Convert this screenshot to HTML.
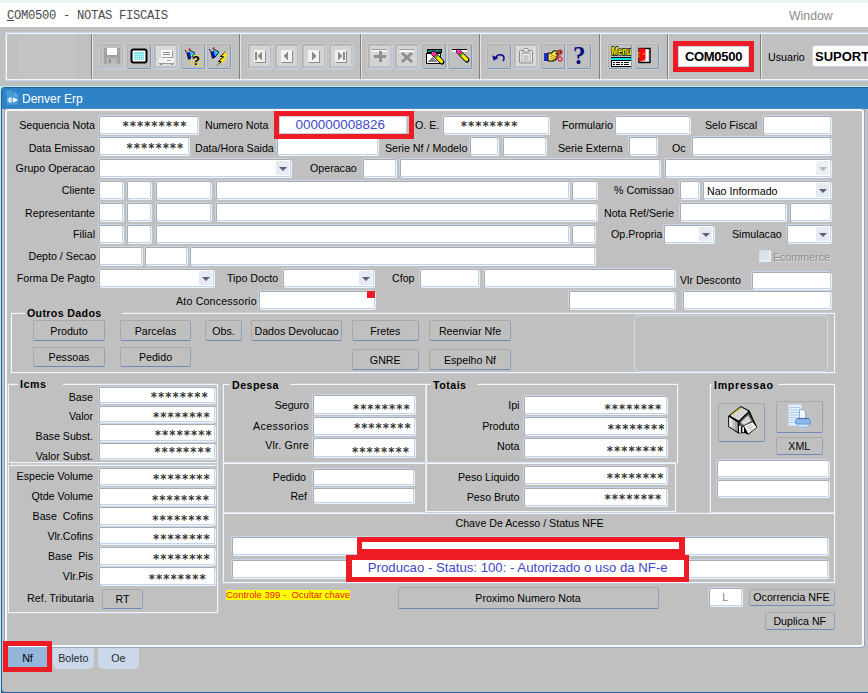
<!DOCTYPE html>
<html><head><meta charset="utf-8"><title>COM0500 - NOTAS FISCAIS</title>
<style>
html,body{margin:0;padding:0;}
body{width:868px;height:693px;overflow:hidden;background:#c0c0c0;font-family:"Liberation Sans",sans-serif;font-size:10.67px;color:#000;}
#root{position:relative;width:868px;height:693px;overflow:hidden;background:#c0c0c0;}
#root div{position:absolute;box-sizing:border-box;}
.l{white-space:pre;line-height:16px;height:16px;font-size:10.67px;}
.f{background:#fff;border:1px solid #c2d3ea;border-top-color:#ababab;border-left-color:#ababab;border-radius:2px;box-shadow:-1px -1px 0 #c5d6ec, 1px 1px 0 #eef3f9;}
.f span{position:absolute;top:50%;margin-top:-7px;line-height:16px;font-family:"DejaVu Sans Mono","Liberation Mono",monospace;font-size:12px;color:#2a2a2a;white-space:pre;-webkit-text-stroke:0.25px #2a2a2a;}
.c .ar{position:absolute;right:3.5px;top:50%;margin-top:-1px;width:0;height:0;border-left:4px solid transparent;border-right:4px solid transparent;border-top:4px solid #556;}
.c:after{content:"";position:absolute;right:1px;top:1px;bottom:1px;width:13px;background:#e6eaf2;z-index:0;}
.c .ar{z-index:1;}
.c.d:after{background:#eceff4;}
.c .ct{-webkit-text-stroke:0;left:3px;top:50%;margin-top:-7px;font-family:"Liberation Sans",sans-serif;font-size:10.67px;color:#000;}
.b{background:#c0c0c0;border:1px solid #8ea2bd;border-top-color:#a9a9a9;border-left-color:#a9a9a9;border-bottom-color:#6c8bb5;border-radius:2px;text-align:center;font-size:10.67px;white-space:pre;display:flex;align-items:center;justify-content:center;}
.g{border:1px solid #f2f6fb;box-shadow:0 0 0 1px rgba(196,212,234,0.450);}
.gt{background:#c0c0c0;font-weight:bold;font-size:10.67px;line-height:16px;height:16px;text-align:left;padding-left:2px;white-space:pre;}
.red{border:4px solid #ed1c24;z-index:5;}

</style></head><body>
<div id="root">
<div class="" style="left:0px;top:0px;width:868px;height:3px;background:#e6f4f6"></div>
<div class="" style="left:0px;top:3px;width:868px;height:24px;background:#fff"></div>
<div style="left:7px;top:9px;font-family:'Liberation Mono',monospace;font-size:12.2px;letter-spacing:-0.32px;line-height:14px;color:#4a4a4a;white-space:pre"><u>C</u>OM0500 - NOTAS FISCAIS</div>
<div style="left:789px;top:9px;font-size:12.3px;line-height:14px;color:#8a8a8a;white-space:pre">Window</div>
<div class="" style="left:6px;top:33px;width:874px;height:47px;border:1px solid #f2f6fb;box-shadow:0 0 0 1px #c6d7ec"></div>
<div class="" style="left:18px;top:34px;width:58px;height:45px;background:#c3c3c3"></div>
<div class="" style="left:91px;top:34px;width:1px;height:45px;background:#7f7f7f"></div>
<div class="" style="left:92px;top:34px;width:1px;height:45px;background:#e6e6e6"></div>
<div class="" style="left:239px;top:34px;width:1px;height:45px;background:#7f7f7f"></div>
<div class="" style="left:240px;top:34px;width:1px;height:45px;background:#e6e6e6"></div>
<div class="" style="left:360px;top:34px;width:1px;height:45px;background:#7f7f7f"></div>
<div class="" style="left:361px;top:34px;width:1px;height:45px;background:#e6e6e6"></div>
<div class="" style="left:479px;top:34px;width:1px;height:45px;background:#7f7f7f"></div>
<div class="" style="left:480px;top:34px;width:1px;height:45px;background:#e6e6e6"></div>
<div class="" style="left:599px;top:34px;width:1px;height:45px;background:#7f7f7f"></div>
<div class="" style="left:600px;top:34px;width:1px;height:45px;background:#e6e6e6"></div>
<div class="" style="left:667px;top:34px;width:1px;height:45px;background:#7f7f7f"></div>
<div class="" style="left:668px;top:34px;width:1px;height:45px;background:#e6e6e6"></div>
<div class="" style="left:760px;top:34px;width:1px;height:45px;background:#7f7f7f"></div>
<div class="" style="left:761px;top:34px;width:1px;height:45px;background:#e6e6e6"></div>
<div class="" style="left:100px;top:44px;width:24px;height:25px;border:1px solid #b0b0b0;border-right-color:#b9cbe2;border-bottom-color:#b9cbe2;border-radius:2px;box-shadow:0 0 0 1px rgba(220,228,238,0.350)"><svg width="24" height="24" viewBox="0 0 24 24" style="position:absolute;left:-1px;top:-1px" shape-rendering="crispEdges"><rect x="0" y="0" width="0" height="0"/><path d="M4 4h15l1 1v15h-16z" fill="#a3a3a3"/><rect x="7" y="4" width="10" height="7" fill="#fff"/><rect x="7" y="14" width="10" height="6" fill="#b8b8b8"/><rect x="9" y="15" width="2" height="4" fill="#8a8a8a"/></svg></div>
<div class="" style="left:127px;top:44px;width:24px;height:25px;border:1px solid #b0b0b0;border-right-color:#7c9bc3;border-bottom-color:#7c9bc3;border-radius:2px;box-shadow:0 0 0 1px rgba(220,228,238,0.350)"><svg width="24" height="24" viewBox="0 0 24 24" style="position:absolute;left:-1px;top:-1px" shape-rendering="crispEdges"><rect x="4.5" y="5.5" width="15" height="13" rx="2" fill="#fff" stroke="#000" stroke-width="2" shape-rendering="auto"/><rect x="7" y="8" width="10" height="8" fill="#7fe7f2"/><path d="M7 10h10M7 12h10M7 14h10" stroke="#e8ffff" stroke-width="1" stroke-dasharray="1 1"/></svg></div>
<div class="" style="left:153.5px;top:44px;width:24.0px;height:25px;border:1px solid #b0b0b0;border-right-color:#b9cbe2;border-bottom-color:#b9cbe2;border-radius:2px;box-shadow:0 0 0 1px rgba(220,228,238,0.350)"><svg width="24" height="24" viewBox="0 0 24 24" style="position:absolute;left:-1px;top:-1px" shape-rendering="crispEdges"><rect x="2" y="2" width="20" height="20" fill="#dadada"/><rect x="7" y="6" width="11" height="7.500" fill="#fbfbfb"/><path d="M7.500 13.500h10M18.500 7v6.500" stroke="#9c9c9c" stroke-width="1"/><path d="M9 8.500h7M9 10.500h7" stroke="#8a8a8a" stroke-width="1"/><rect x="5" y="14" width="15" height="5" fill="#f4f4f4"/><path d="M5 19.500h15" stroke="#9a9a9a"/><path d="M13 16.500h4" stroke="#a8a8a8"/><path d="M6 20.500h2M17 20.500h2" stroke="#8a8a8a"/></svg></div>
<div class="" style="left:180.5px;top:44px;width:24.0px;height:25px;border:1px solid #b0b0b0;border-right-color:#7c9bc3;border-bottom-color:#7c9bc3;border-radius:2px;box-shadow:0 0 0 1px rgba(220,228,238,0.350)"><svg width="24" height="24" viewBox="0 0 24 24" style="position:absolute;left:-1px;top:-1px" shape-rendering="crispEdges"><g transform="translate(0 1.5)" shape-rendering="auto"><path d="M6 7.500l3.200-1.500 1 6.500-2.700 1.300z" fill="#0a14e6"/><path d="M9.200 6l4.500 2-3.500 4.500z" fill="#14d2f0"/><path d="M4 4.500l3 4M7.500 4l6.500 3.500M6 7.500l1.500 6.300 2.700-1.300 3.500-4.500" stroke="#000" stroke-width="0.900" fill="none"/><rect x="8" y="2.800" width="1.500" height="1.500" fill="#e81010"/></g><path d="M10 11.500h11M10 13.500h11M10 15.500h11M10 17.500h11M10 19.500h11M10 21.500h11" stroke="#f4e800" stroke-width="1" stroke-dasharray="1 1"/><text x="15" y="21" font-family="Liberation Sans,sans-serif" font-weight="bold" font-size="13" text-anchor="middle" fill="#000" shape-rendering="auto">?</text></svg></div>
<div class="" style="left:207px;top:44px;width:24px;height:25px;border:1px solid #b0b0b0;border-right-color:#7c9bc3;border-bottom-color:#7c9bc3;border-radius:2px;box-shadow:0 0 0 1px rgba(220,228,238,0.350)"><svg width="24" height="24" viewBox="0 0 24 24" style="position:absolute;left:-1px;top:-1px" shape-rendering="crispEdges"><g transform="translate(-2 0.5)" shape-rendering="auto"><path d="M6 7.500l3.200-1.500 1 6.500-2.700 1.300z" fill="#0a14e6"/><path d="M9.200 6l4.500 2-3.500 4.500z" fill="#14d2f0"/><path d="M4 4.500l3 4M7.500 4l6.500 3.500M6 7.500l1.500 6.300 2.700-1.300 3.500-4.500" stroke="#000" stroke-width="0.900" fill="none"/><rect x="8" y="2.800" width="1.500" height="1.500" fill="#e81010"/></g><g shape-rendering="auto"><path d="M19.800 6.500L13.500 12.500L16.500 13L11.500 17.500L14 18L9.500 22.300L19 15.500L16.500 15L20.500 11L17.500 10.500Z" fill="#000" transform="translate(-0.800 0.300)"/><path d="M20.300 6L14.500 12L17.500 12.500L12.500 17L15 17.500L10.500 21.800L19.500 15.500L17 15L21 11L18 10.500Z" fill="#ffee00"/></g></svg></div>
<div class="" style="left:248px;top:44px;width:24px;height:25px;border:1px solid #b0b0b0;border-right-color:#b9cbe2;border-bottom-color:#b9cbe2;border-radius:2px;box-shadow:0 0 0 1px rgba(220,228,238,0.350)"><svg width="24" height="24" viewBox="0 0 24 24" style="position:absolute;left:-1px;top:-1px" shape-rendering="crispEdges"><rect x="2" y="2" width="20" height="20" fill="#d4d4d4"/><rect x="6" y="6" width="11" height="12" fill="#f2f2f2"/><path d="M7 18.5h11M17.5 7v12" stroke="#8c8c8c" stroke-width="1"/><path d="M8 8v8" stroke="#8c8c8c" stroke-width="1.5"/><path d="M14 8v8l-5-4z" fill="#8c8c8c"/></svg></div>
<div class="" style="left:275px;top:44px;width:24px;height:25px;border:1px solid #b0b0b0;border-right-color:#b9cbe2;border-bottom-color:#b9cbe2;border-radius:2px;box-shadow:0 0 0 1px rgba(220,228,238,0.350)"><svg width="24" height="24" viewBox="0 0 24 24" style="position:absolute;left:-1px;top:-1px" shape-rendering="crispEdges"><rect x="2" y="2" width="20" height="20" fill="#d4d4d4"/><rect x="6" y="6" width="11" height="12" fill="#f2f2f2"/><path d="M7 18.5h11M17.5 7v12" stroke="#8c8c8c" stroke-width="1"/><path d="M13 8v8l-5-4z" fill="#8c8c8c"/></svg></div>
<div class="" style="left:301.5px;top:44px;width:24.0px;height:25px;border:1px solid #b0b0b0;border-right-color:#b9cbe2;border-bottom-color:#b9cbe2;border-radius:2px;box-shadow:0 0 0 1px rgba(220,228,238,0.350)"><svg width="24" height="24" viewBox="0 0 24 24" style="position:absolute;left:-1px;top:-1px" shape-rendering="crispEdges"><rect x="2" y="2" width="20" height="20" fill="#d4d4d4"/><rect x="6" y="6" width="11" height="12" fill="#f2f2f2"/><path d="M7 18.5h11M17.5 7v12" stroke="#8c8c8c" stroke-width="1"/><path d="M10 8v8l5-4z" fill="#8c8c8c"/></svg></div>
<div class="" style="left:328.5px;top:44px;width:24.0px;height:25px;border:1px solid #b0b0b0;border-right-color:#b9cbe2;border-bottom-color:#b9cbe2;border-radius:2px;box-shadow:0 0 0 1px rgba(220,228,238,0.350)"><svg width="24" height="24" viewBox="0 0 24 24" style="position:absolute;left:-1px;top:-1px" shape-rendering="crispEdges"><rect x="2" y="2" width="20" height="20" fill="#d4d4d4"/><rect x="6" y="6" width="11" height="12" fill="#f2f2f2"/><path d="M7 18.5h11M17.5 7v12" stroke="#8c8c8c" stroke-width="1"/><path d="M15 8v8" stroke="#8c8c8c" stroke-width="1.5"/><path d="M9 8v8l5-4z" fill="#8c8c8c"/></svg></div>
<div class="" style="left:368px;top:44px;width:24px;height:25px;border:1px solid #b0b0b0;border-right-color:#b9cbe2;border-bottom-color:#b9cbe2;border-radius:2px;box-shadow:0 0 0 1px rgba(220,228,238,0.350)"><svg width="24" height="24" viewBox="0 0 24 24" style="position:absolute;left:-1px;top:-1px" shape-rendering="crispEdges"><rect x="2" y="2" width="20" height="20" fill="#d4d4d4"/><rect x="4" y="5" width="15" height="3" fill="#f6f6f6"/><path d="M4 5.5h15" stroke="#9a9a9a"/><path d="M12 7v11M6 12.5h12" stroke="#8f8f8f" stroke-width="3"/></svg></div>
<div class="" style="left:395px;top:44px;width:24px;height:25px;border:1px solid #b0b0b0;border-right-color:#b9cbe2;border-bottom-color:#b9cbe2;border-radius:2px;box-shadow:0 0 0 1px rgba(220,228,238,0.350)"><svg width="24" height="24" viewBox="0 0 24 24" style="position:absolute;left:-1px;top:-1px" shape-rendering="crispEdges"><rect x="2" y="2" width="20" height="20" fill="#d4d4d4"/><rect x="4" y="5" width="15" height="3" fill="#f6f6f6"/><path d="M4 5.5h15" stroke="#9a9a9a"/><path d="M7 9l10 9M17 9l-10 9" stroke="#8f8f8f" stroke-width="3" shape-rendering="auto"/></svg></div>
<div class="" style="left:421.5px;top:44px;width:24.0px;height:25px;border:1px solid #b0b0b0;border-right-color:#7c9bc3;border-bottom-color:#7c9bc3;border-radius:2px;box-shadow:0 0 0 1px rgba(220,228,238,0.350)"><svg width="24" height="24" viewBox="0 0 24 24" style="position:absolute;left:-1px;top:-1px" shape-rendering="crispEdges"><rect x="5" y="5" width="14" height="3" fill="#0a7a80" stroke="#000"/><rect x="4.5" y="9.500" width="14" height="10" fill="#fff" stroke="#000" shape-rendering="auto"/><path d="M6 18l4-5 5 5z" fill="#888"/><g shape-rendering="auto"><path d="M11.5 9.5l8.500 8.500" stroke="#000" stroke-width="5" stroke-linecap="round"/><path d="M11.5 9.5l8 8" stroke="#ffee00" stroke-width="3.200" stroke-linecap="round"/><path d="M11.5 9.5l2.500 2.500" stroke="#ff30c0" stroke-width="3.600" stroke-linecap="round"/><path d="M13 11l1 1" stroke="#e01818" stroke-width="3.600"/><path d="M14 12l1.200 1.200" stroke="#20d020" stroke-width="3.600"/></g></svg></div>
<div class="" style="left:448px;top:44px;width:24px;height:25px;border:1px solid #b0b0b0;border-right-color:#7c9bc3;border-bottom-color:#7c9bc3;border-radius:2px;box-shadow:0 0 0 1px rgba(220,228,238,0.350)"><svg width="24" height="24" viewBox="0 0 24 24" style="position:absolute;left:-1px;top:-1px" shape-rendering="crispEdges"><rect x="4" y="5" width="15" height="3" fill="#fff"/><path d="M4 5.5h15" stroke="#000"/><g shape-rendering="auto"><path d="M10.5 7.5l8.500 8.500" stroke="#000" stroke-width="5" stroke-linecap="round"/><path d="M10.5 7.5l8 8" stroke="#ffee00" stroke-width="3.200" stroke-linecap="round"/><path d="M10.5 7.5l2.500 2.500" stroke="#ff30c0" stroke-width="3.600" stroke-linecap="round"/><path d="M12 9l1 1" stroke="#e01818" stroke-width="3.600"/><path d="M13 10l1.200 1.200" stroke="#20d020" stroke-width="3.600"/></g></svg></div>
<div class="" style="left:486.5px;top:44px;width:24.0px;height:25px;border:1px solid #b0b0b0;border-right-color:#7c9bc3;border-bottom-color:#7c9bc3;border-radius:2px;box-shadow:0 0 0 1px rgba(220,228,238,0.350)"><svg width="24" height="24" viewBox="0 0 24 24" style="position:absolute;left:-1px;top:-1px" shape-rendering="crispEdges"><g shape-rendering="auto"><path d="M9 13.500c1.500-3.500 7-3.800 8 0 0.300 1.500-0.300 2.700-1.300 3.400" fill="none" stroke="#0a0a90" stroke-width="1.500"/><path d="M5.300 11.200l1.200 5.500 4.800-2.700z" fill="#0a0a90"/></g></svg></div>
<div class="" style="left:513.5px;top:44px;width:24.0px;height:25px;border:1px solid #b0b0b0;border-right-color:#b9cbe2;border-bottom-color:#b9cbe2;border-radius:2px;box-shadow:0 0 0 1px rgba(220,228,238,0.350)"><svg width="24" height="24" viewBox="0 0 24 24" style="position:absolute;left:-1px;top:-1px" shape-rendering="crispEdges"><rect x="2" y="2" width="20" height="20" fill="#dadada"/><g shape-rendering="auto"><rect x="5.500" y="6.500" width="13" height="12.500" rx="1" fill="#e4e4e4" stroke="#8a8a8a"/><path d="M9 6.500c0-3 6-3 6 0v1.500h-6z" fill="#e4e4e4" stroke="#8a8a8a"/><rect x="8" y="9.500" width="8" height="8.500" fill="#f4f4f4" stroke="#a0a0a0" stroke-width="0.800"/><path d="M9.500 12h5M9.500 14h5M9.500 16h5" stroke="#8f8f8f" stroke-width="0.900"/></g></svg></div>
<div class="" style="left:540.5px;top:44px;width:24.0px;height:25px;border:1px solid #b0b0b0;border-right-color:#7c9bc3;border-bottom-color:#7c9bc3;border-radius:2px;box-shadow:0 0 0 1px rgba(220,228,238,0.350)"><svg width="24" height="24" viewBox="0 0 24 24" style="position:absolute;left:-1px;top:-1px" shape-rendering="crispEdges"><g shape-rendering="auto"><rect x="3" y="9" width="4" height="8" fill="#1a2ed0"/><path d="M7 9h4l1-2h8v2h-5v1h2v2h-1v2h-1v2h-2v1h-6z" fill="#ffe24a" stroke="#000" stroke-width="1"/><path d="M10 10v6M12 11v5M14 12v3" stroke="#000" stroke-width="0.600" stroke-dasharray="1 1"/><circle cx="19" cy="8" r="2" fill="none" stroke="#e0202a" stroke-width="1.200"/><circle cx="19" cy="15" r="2" fill="none" stroke="#e0202a" stroke-width="1.200"/><path d="M15 12h5" stroke="#e0202a"/></g></svg></div>
<div class="" style="left:567px;top:44px;width:24px;height:25px;border:1px solid #b0b0b0;border-right-color:#7c9bc3;border-bottom-color:#7c9bc3;border-radius:2px;box-shadow:0 0 0 1px rgba(220,228,238,0.350)"><svg width="24" height="24" viewBox="0 0 24 24" style="position:absolute;left:-1px;top:-1px" shape-rendering="crispEdges"><text x="12.200" y="20.300" font-family="Liberation Serif,serif" font-weight="bold" font-size="25" text-anchor="middle" fill="#0a0a80" shape-rendering="auto">?</text></svg></div>
<div class="" style="left:608px;top:44px;width:24px;height:25px;border:1px solid #b0b0b0;border-right-color:#7c9bc3;border-bottom-color:#7c9bc3;border-radius:2px;box-shadow:0 0 0 1px rgba(220,228,238,0.350)"><svg width="23" height="24" viewBox="0 0 23 24" style="position:absolute;left:-1px;top:-1px" shape-rendering="crispEdges"><text x="3.500" y="11.300" font-family="Liberation Sans,sans-serif" font-weight="bold" font-size="10.500" fill="#ffff00" stroke="#000" stroke-width="1.600" paint-order="stroke" textLength="20" lengthAdjust="spacingAndGlyphs" shape-rendering="auto">Menu</text><path d="M3 13h20" stroke="#000" stroke-width="1"/><path d="M3 14.500h20" stroke="#00e0e8" stroke-width="2"/><rect x="3.500" y="16.500" width="20" height="6" fill="#fff" stroke="#000"/><path d="M5 18.500h2M8 18.500h4M13 18.500h2M16 18.500h5M5 20.500h2M8 20.500h4M13 20.500h2M16 20.500h5" stroke="#000" stroke-width="1"/></svg></div>
<div class="" style="left:635px;top:44px;width:24px;height:25px;border:1px solid #b0b0b0;border-right-color:#7c9bc3;border-bottom-color:#7c9bc3;border-radius:2px;box-shadow:0 0 0 1px rgba(220,228,238,0.350)"><svg width="24" height="24" viewBox="0 0 24 24" style="position:absolute;left:-1px;top:-1px" shape-rendering="crispEdges"><g shape-rendering="auto"><rect x="4" y="4.500" width="11" height="14" fill="#d8d8d8" stroke="#000" stroke-width="1.400"/><rect x="10" y="5.500" width="3" height="11" fill="#fff"/><path d="M4 4.500h6.500v10.500l-1 1.500h-2l-0.800 1h-2.700z" fill="#ff0808"/><rect x="8" y="9.500" width="1.300" height="1.300" fill="#ffee00"/><rect x="3" y="8.500" width="1.200" height="1.200" fill="#ffee00"/><rect x="3" y="11.500" width="1.200" height="1.200" fill="#ffee00"/></g></svg></div>
<div class="red" style="left:673px;top:41px;width:81px;height:31px;border-width:5px"></div>
<div class="" style="left:678px;top:46px;width:71px;height:21px;background:#fff;border:1px solid #c3d3e6;font-weight:bold;font-size:13px;letter-spacing:-0.3px;text-align:center;line-height:19px">COM0500</div>
<div class="l" style="left:768px;top:49px;">Usuario</div>
<div class="" style="left:812px;top:44.5px;width:68px;height:22.5px;background:#fff;border:1px solid #c3d3e6;border-radius:3px;font-weight:bold;font-size:13px;line-height:21px;padding-left:2px;white-space:pre">SUPORTE</div>
<div class="" style="left:0px;top:83px;width:868px;height:610px;background:#c0c0c0"></div>
<div class="" style="left:0px;top:86px;width:868px;height:607px;background:#b4ecf2"></div>
<div class="" style="left:1px;top:87px;width:879px;height:613px;background:#2b5f9c;border-radius:4px 0 0 4px"></div>
<div class="" style="left:2px;top:88px;width:878px;height:21px;background:#2e83c6;border-radius:3px 0 0 0"></div>
<div class="" style="left:2px;top:109px;width:878px;height:583px;background:#c0c0c0;border-radius:0 0 0 3px"></div>
<div style="left:22px;top:92px;color:#fff;font-size:12px;line-height:15px;white-space:pre">Denver Erp</div>
<svg style="position:absolute;left:6px;top:90px" width="13" height="15" viewBox="0 0 13 15"><path d="M0.500 0.500h6v3.500h1.500v-2.500l4.500 4v9.500h-12z" fill="#4a9ad9" stroke="#3a8acb" stroke-width="0.800"/><path d="M8 1.500l4.500 4h-4.500z" fill="#62aae3"/><circle cx="4.300" cy="10" r="1.900" fill="#fff"/><circle cx="4.300" cy="10" r="2.500" fill="none" stroke="#fff" stroke-width="1" stroke-dasharray="0.900 1.060"/><circle cx="5" cy="10" r="0.800" fill="#3a8acb"/><path d="M7.300 7.300l4.600 2.700-4.600 2.700z" fill="#fff"/></svg>
<div class="" style="left:5px;top:109px;width:859px;height:538px;border:2px solid #f4f7fc;border-radius:3px;box-shadow:0 0 0 1px rgba(110,145,195,0.550);background:transparent"></div>
<div class="l" style="right:773px;top:117px;">Sequencia Nota</div>
<div class="f" style="left:99px;top:116px;width:99px;height:18px;"><span style="right:10px">*********</span></div>
<div class="l" style="left:205px;top:117px;">Numero Nota</div>
<div class="red" style="left:274px;top:111px;width:140px;height:28px;border-width:5px;background:#c0c0c0"></div>
<div class="" style="left:279px;top:116px;width:128px;height:18px;background:#fff;border:1px solid #c3d3e6;border-radius:0 2px 2px 0;z-index:6;color:#3f48cc;font-size:13.4px;line-height:15px;padding-left:15.500px">000000008826</div>
<div class="l" style="left:415px;top:117px;">O. E.</div>
<div class="f" style="left:443px;top:116px;width:106px;height:18px;"><span style="right:30px">********</span></div>
<div class="l" style="left:562px;top:117px;">Formulario</div>
<div class="f" style="left:615px;top:116px;width:75px;height:18px;"></div>
<div class="l" style="left:705px;top:117px;">Selo Fiscal</div>
<div class="f" style="left:763px;top:116px;width:68px;height:18px;"></div>
<div class="l" style="right:773px;top:140px;">Data Emissao</div>
<div class="f" style="left:99px;top:137px;width:90px;height:18px;"><span style="right:4.2px;top:2.3px;margin-top:0">********</span></div>
<div class="l" style="left:195px;top:140px;">Data/Hora Saida</div>
<div class="f" style="left:277px;top:137px;width:101px;height:18px;"></div>
<div class="l" style="left:385px;top:140px;">Serie Nf / Modelo</div>
<div class="f" style="left:470px;top:137px;width:28px;height:18px;"></div>
<div class="f" style="left:503px;top:137px;width:43px;height:18px;"></div>
<div class="l" style="left:558px;top:140px;">Serie Externa</div>
<div class="f" style="left:629px;top:137px;width:28px;height:18px;"></div>
<div class="l" style="left:672px;top:140px;">Oc</div>
<div class="f" style="left:692px;top:137px;width:139px;height:18px;"></div>
<div class="l" style="right:773px;top:160px;">Grupo Operacao</div>
<div class="f c" style="left:99px;top:159px;width:192px;height:18px;"><i class="ar" style="border-top-color:#5a607a"></i></div>
<div class="l" style="left:310px;top:160px;">Operacao</div>
<div class="f" style="left:363px;top:159px;width:33px;height:18px;"></div>
<div class="f" style="left:400px;top:159px;width:260px;height:18px;"></div>
<div class="f c d" style="left:665px;top:159px;width:166px;height:18px;"><i class="ar" style="border-top-color:#b4b8be"></i></div>
<div class="l" style="right:773px;top:182px;">Cliente</div>
<div class="f" style="left:99px;top:181px;width:24px;height:18px;"></div>
<div class="f" style="left:127px;top:181px;width:24px;height:18px;"></div>
<div class="f" style="left:156px;top:181px;width:55px;height:18px;"></div>
<div class="f" style="left:216px;top:181px;width:353px;height:18px;"></div>
<div class="f" style="left:572px;top:181px;width:25px;height:18px;"></div>
<div class="l" style="left:614px;top:182px;">% Comissao</div>
<div class="f" style="left:680px;top:181px;width:19px;height:18px;"></div>
<div class="f c" style="left:703px;top:181px;width:128px;height:18px;"><span class="ct">Nao Informado</span><i class="ar" style="border-top-color:#5a607a"></i></div>
<div class="l" style="right:773px;top:205px;">Representante</div>
<div class="f" style="left:99px;top:203px;width:24px;height:18px;"></div>
<div class="f" style="left:127px;top:203px;width:24px;height:18px;"></div>
<div class="f" style="left:156px;top:203px;width:55px;height:18px;"></div>
<div class="f" style="left:216px;top:203px;width:381px;height:18px;"></div>
<div class="l" style="left:604px;top:205px;">Nota Ref/Serie</div>
<div class="f" style="left:680px;top:203px;width:106px;height:18px;"></div>
<div class="f" style="left:790px;top:203px;width:41px;height:18px;"></div>
<div class="l" style="right:773px;top:226px;">Filial</div>
<div class="f" style="left:99px;top:225px;width:24px;height:18px;"></div>
<div class="f" style="left:127px;top:225px;width:24px;height:18px;"></div>
<div class="f" style="left:156px;top:225px;width:413px;height:18px;"></div>
<div class="f" style="left:572px;top:225px;width:23px;height:18px;"></div>
<div class="l" style="left:611px;top:226px;">Op.Propria</div>
<div class="f c" style="left:664px;top:225px;width:50px;height:18px;"><i class="ar" style="border-top-color:#5a607a"></i></div>
<div class="l" style="left:732px;top:226px;">Simulacao</div>
<div class="f c" style="left:787px;top:225px;width:44px;height:18px;"><i class="ar" style="border-top-color:#5a607a"></i></div>
<div class="l" style="right:772px;top:248px;">Depto / Secao</div>
<div class="f" style="left:99px;top:247px;width:43px;height:18px;"></div>
<div class="f" style="left:145px;top:247px;width:42px;height:18px;"></div>
<div class="f" style="left:190px;top:247px;width:405px;height:18px;"></div>
<div class="" style="left:759px;top:250px;width:12px;height:12px;background:#dce2eb;border:1px solid #d4dae4;border-right:2px solid #e8ecf2;border-bottom:2px solid #e8ecf2"></div>
<div class="l" style="left:773px;top:249px;color:#8e8e8e;text-shadow:1px 1px 0 #e0e0e0">Ecommerce</div>
<div class="l" style="right:773px;top:270px;">Forma De Pagto</div>
<div class="f c" style="left:99px;top:269px;width:115px;height:18px;"><i class="ar" style="border-top-color:#5a607a"></i></div>
<div class="l" style="left:227px;top:270px;">Tipo Docto</div>
<div class="f c" style="left:283px;top:269px;width:91px;height:18px;"><i class="ar" style="border-top-color:#5a607a"></i></div>
<div class="l" style="left:392px;top:270px;">Cfop</div>
<div class="f" style="left:420px;top:269px;width:59px;height:18px;"></div>
<div class="f" style="left:484px;top:269px;width:191px;height:18px;"></div>
<div class="l" style="left:680px;top:272px;">Vlr Desconto</div>
<div class="f" style="left:752px;top:272px;width:79px;height:17px;"></div>
<div class="l" style="left:176px;top:293px;letter-spacing:0.17px">Ato Concessorio</div>
<div class="f" style="left:259px;top:291px;width:116px;height:18px;"></div>
<div class="" style="left:367px;top:291px;width:8px;height:7px;background:#ed1c24"></div>
<div class="f" style="left:569px;top:291px;width:106px;height:18px;"></div>
<div class="f" style="left:683px;top:291px;width:148px;height:18px;"></div>
<div class="g" style="left:11px;top:313px;width:824px;height:60px;"></div>
<div class="gt" style="left:25px;top:305px;width:97px;letter-spacing:0.336px;">Outros Dados</div>
<div class="b" style="left:33px;top:320px;width:72px;height:21px;">Produto</div>
<div class="b" style="left:120px;top:320px;width:71px;height:21px;">Parcelas</div>
<div class="b" style="left:205px;top:320px;width:37px;height:21px;">Obs.</div>
<div class="b" style="left:251px;top:320px;width:91px;height:21px;">Dados Devolucao</div>
<div class="b" style="left:352px;top:320px;width:66.5px;height:21px;">Fretes</div>
<div class="b" style="left:429px;top:320px;width:82px;height:21px;">Reenviar Nfe</div>
<div class="b" style="left:33px;top:347px;width:72px;height:20px;">Pessoas</div>
<div class="b" style="left:120px;top:347px;width:71px;height:20px;">Pedido</div>
<div class="b" style="left:352px;top:349px;width:66.5px;height:21px;">GNRE</div>
<div class="b" style="left:429px;top:349px;width:82px;height:21px;">Espelho Nf</div>
<div class="" style="left:634px;top:315px;width:194px;height:57px;border:1px solid #cdd9ea;border-radius:4px"></div>
<div class="g" style="left:8px;top:384px;width:210px;height:79px;"></div>
<div class="gt" style="left:18px;top:376px;width:45px;letter-spacing:0.550px;">Icms</div>
<div class="l" style="right:775px;top:389px;">Base</div>
<div class="f" style="left:99px;top:387px;width:116px;height:16px;"><span style="right:5.9px;top:0.5px;margin-top:0">********</span></div>
<div class="l" style="right:775px;top:408px;">Valor</div>
<div class="f" style="left:99px;top:405.5px;width:116px;height:16.0px;"><span style="right:3.7px;top:2.0px;margin-top:0">********</span></div>
<div class="l" style="right:775px;top:428px;">Base Subst.</div>
<div class="f" style="left:99px;top:424px;width:116px;height:16.5px;"><span style="right:1.9px;top:2.0px;margin-top:0">********</span></div>
<div class="l" style="right:775px;top:447.5px;">Valor Subst.</div>
<div class="f" style="left:99px;top:443px;width:116px;height:15.5px;"><span style="right:2.5px;top:0.0px;margin-top:0">********</span></div>
<div class="g" style="left:8px;top:465px;width:210px;height:147.5px;"></div>
<div class="l" style="right:775px;top:467.5px;">Especie Volume</div>
<div class="f" style="left:99px;top:468px;width:116px;height:17px;"><span style="right:3.7px;top:2.2px;margin-top:0">********</span></div>
<div class="l" style="right:775px;top:487.5px;">Qtde Volume</div>
<div class="f" style="left:99px;top:487.5px;width:116px;height:17.0px;"><span style="right:4.6px;top:3.6px;margin-top:0">********</span></div>
<div class="l" style="right:775px;top:508px;">Base  Cofins</div>
<div class="f" style="left:99px;top:507px;width:116px;height:17.5px;"><span style="right:4.5px;top:3.9px;margin-top:0">********</span></div>
<div class="l" style="right:775px;top:528px;">Vlr.Cofins</div>
<div class="f" style="left:99px;top:527px;width:116px;height:17px;"><span style="right:3.7px;top:3.1px;margin-top:0">********</span></div>
<div class="l" style="right:775px;top:548px;">Base  Pis</div>
<div class="f" style="left:99px;top:547px;width:116px;height:17.5px;"><span style="right:3.7px;top:3.2px;margin-top:0">********</span></div>
<div class="l" style="right:775px;top:568px;">Vlr.Pis</div>
<div class="f" style="left:99px;top:567px;width:116px;height:17.5px;"><span style="right:7.9px;top:2.9px;margin-top:0">********</span></div>
<div class="l" style="right:774px;top:590px;">Ref. Tributaria</div>
<div class="b" style="left:102px;top:589px;width:41px;height:20px;">RT</div>
<div class="g" style="left:222.5px;top:384px;width:203.0px;height:79px;"></div>
<div class="gt" style="left:230px;top:377px;width:60px;letter-spacing:0.451px;">Despesa</div>
<div class="l" style="right:559px;top:397.0px;">Seguro</div>
<div class="f" style="left:312.5px;top:395px;width:102.0px;height:18.5px;"><span style="right:3.3px;top:4.5px;margin-top:0">********</span></div>
<div class="l" style="right:559px;top:417.5px;letter-spacing:0.38px">Acessorios</div>
<div class="f" style="left:312.5px;top:416.5px;width:102.0px;height:18.5px;"><span style="right:2.3px;top:2.7px;margin-top:0">********</span></div>
<div class="l" style="right:559px;top:437.0px;letter-spacing:0.200px">Vlr. Gnre</div>
<div class="f" style="left:312.5px;top:437.5px;width:102.0px;height:19.5px;"><span style="right:4.1px;top:5.8px;margin-top:0">********</span></div>
<div class="g" style="left:222.5px;top:463px;width:203.0px;height:50px;"></div>
<div class="l" style="right:562px;top:469px;">Pedido</div>
<div class="f" style="left:312.5px;top:468.5px;width:101.0px;height:16.0px;"></div>
<div class="l" style="right:561px;top:487.5px;">Ref</div>
<div class="f" style="left:312.5px;top:487.5px;width:101.0px;height:15.5px;"></div>
<div class="g" style="left:425.5px;top:384px;width:252.0px;height:79px;"></div>
<div class="gt" style="left:431px;top:377px;width:46px;letter-spacing:0.485px;">Totais</div>
<div class="l" style="right:348.5px;top:396.5px;">Ipi</div>
<div class="f" style="left:524px;top:395.5px;width:143px;height:18.0px;"><span style="right:4.2px;top:4.3px;margin-top:0">********</span></div>
<div class="l" style="right:348.5px;top:417.5px;">Produto</div>
<div class="f" style="left:524px;top:416.5px;width:143px;height:18.0px;"><span style="right:1.0px;top:3.6px;margin-top:0">********</span></div>
<div class="l" style="right:348.5px;top:438px;">Nota</div>
<div class="f" style="left:524px;top:438px;width:143px;height:18.5px;"><span style="right:2.0px;top:3.5px;margin-top:0">********</span></div>
<div class="g" style="left:425.5px;top:463px;width:250.0px;height:49px;"></div>
<div class="l" style="right:348.5px;top:469px;">Peso Liquido</div>
<div class="f" style="left:524px;top:465.5px;width:143px;height:18.5px;"><span style="right:2.0px;top:3.6px;margin-top:0">********</span></div>
<div class="l" style="right:348.5px;top:488.5px;">Peso Bruto</div>
<div class="f" style="left:524px;top:487.5px;width:143px;height:18.5px;"><span style="right:4.2px;top:2.6px;margin-top:0">********</span></div>
<div class="g" style="left:710px;top:384px;width:124.5px;height:129px;"></div>
<div class="gt" style="left:712px;top:377px;width:66px;letter-spacing:0.699px;">Impressao</div>
<div class="b" style="left:717.5px;top:403px;width:47.5px;height:38.5px;"><svg width="48" height="38" viewBox="0 0 48 38" style="position:absolute;left:-1px;top:-1px"><path d="M10.200 13L22.800 3L31.500 7.600L36.500 18.500L39.300 24.200L30.400 31.800L26.500 30L20.300 30.600L10.200 23.800Z" fill="#000"/><path d="M12.300 12.800L22.900 4.200L30.300 8.200L20.800 17.600Z" fill="#e8e8e8"/><path d="M13.300 12.300L22.800 4.800" stroke="#d0c818" stroke-width="1.100"/><path d="M15 13.500l9.300-8.300M17 14.500l9.300-8.300M19 15.500l9.300-8.300M21 16.500l8.800-8" stroke="#a0a0a0" stroke-width="0.700"/><path d="M11.200 14.200L19.800 19.500L19.800 29L11.200 23.200Z" fill="#a0a0a0"/><path d="M11.200 14.200L14.500 16.200L14.500 25.500L11.200 23.200Z" fill="#e8e8e8"/><path d="M14.500 16.200L17 17.800L17 27.200L14.500 25.500Z" fill="#c4c4c4"/><path d="M21.500 18.800L30.800 9.600L35 18L27.500 22L21.500 25Z" fill="#5a5a5a"/><path d="M22.500 19.500L30 12.500L33.500 18L26 22Z" fill="#d8d8d8"/><path d="M26 23L34.500 18.900L38.500 24.200L30.400 30.700Z" fill="#f8f8f8"/><path d="M29 24.200l4.500-2.600M30.300 26l4.500-2.800M31.600 27.600l3-2" stroke="#a0a0a0" stroke-width="0.800"/><path d="M21 22.500L22.800 23.500L22.800 30L21 29.500Z" fill="#fff"/><path d="M24.300 24.500L26 23.800L26 29L24.300 29.500Z" fill="#f0f0f0"/></svg></div>
<div class="b" style="left:775.5px;top:401px;width:47.5px;height:32px;"><svg width="48" height="32" viewBox="0 0 48 32" style="position:absolute;left:-1px;top:-1px"><rect x="12.700" y="3.700" width="12.500" height="21" fill="#e8f1fb" stroke="#c6dbf3" stroke-width="0.800"/><path d="M13.500 6.500h10M13.500 9h10M13.500 11.500h10M13.500 14h10M13.500 16.500h8M13.500 19h8M13.500 21.500h8" stroke="#a9c9ee" stroke-width="1.100"/><path d="M23.500 8.500h4l2 2.500v7h-6z" fill="#f2f7fd" stroke="#7aa7df" stroke-width="0.900"/><path d="M21 17.500h12l1.500 2v3.500h-15v-3.500z" fill="#8db6e8" stroke="#5f93d6" stroke-width="0.900"/><path d="M22 23.500h10v2.500h-10z" fill="#d9e8f9" stroke="#8db6e8" stroke-width="0.800"/><path d="M24 27.500h7" stroke="#b7d2f2" stroke-width="0.800"/><path d="M21 17.500h12" stroke="#3f74bd" stroke-width="1.200"/></svg></div>
<div class="b" style="left:775.5px;top:437px;width:47.5px;height:17.5px;">XML</div>
<div class="f" style="left:717px;top:459.5px;width:112px;height:17.5px;"></div>
<div class="f" style="left:717px;top:479.5px;width:112px;height:17.0px;"></div>
<div class="g" style="left:222.5px;top:513px;width:612.0px;height:69.5px;"></div>
<div class="l" style="left:455.5px;top:514.5px;">Chave De Acesso / Status NFE</div>
<div class="f" style="left:232px;top:537px;width:596px;height:17.5px;"></div>
<div class="f" style="left:232px;top:560px;width:596px;height:18px;"></div>
<div class="red" style="left:357px;top:537px;width:328px;height:18px;background:#fff;border-width:5px 6px 6px 5px"></div>
<div class="red" style="left:346px;top:555px;width:342.5px;height:27px;background:#fff;color:#3f48cc;font-size:13.2px;line-height:16px;text-align:left;padding-left:15.800px;white-space:pre;border-width:5px 5.500px 5.500px 6px">Producao - Status: 100: - Autorizado o uso da NF-e</div>
<div style="left:226px;top:589.5px;background:#ffff00;color:#e8141c;font-size:9.5px;line-height:10.5px;height:10.5px;white-space:pre">Controle 399 -  Ocultar chave</div>
<div class="b" style="left:397.5px;top:587px;width:261.0px;height:21.5px;">Proximo Numero Nota</div>
<div class="f" style="left:708.5px;top:587.5px;width:33.5px;height:18.5px;color:#8a8a8a;text-align:center;line-height:16px">L</div>
<div class="b" style="left:748.5px;top:588.5px;width:86.0px;height:17.0px;">Ocorrencia NFE</div>
<div class="b" style="left:765px;top:612px;width:69.5px;height:17.5px;">Duplica NF</div>
<div class="red" style="left:3px;top:641px;width:49px;height:31px;border-width:5px"></div>
<div class="" style="left:8px;top:646px;width:39px;height:21px;background:#93b6da;text-align:center;line-height:22px;border-top:1px solid #f4f8fc;z-index:6">Nf</div>
<div class="" style="left:52.5px;top:648px;width:41.5px;height:20.5px;background:#cad8ea;color:#2a2a2a;text-align:center;line-height:20px;border-radius:0 0 5px 5px">Boleto</div>
<div class="" style="left:97.5px;top:648px;width:41.5px;height:20.5px;background:#cad8ea;color:#2a2a2a;text-align:center;line-height:20px;border-radius:0 0 5px 5px">Oe</div>
</div>
</body></html>
